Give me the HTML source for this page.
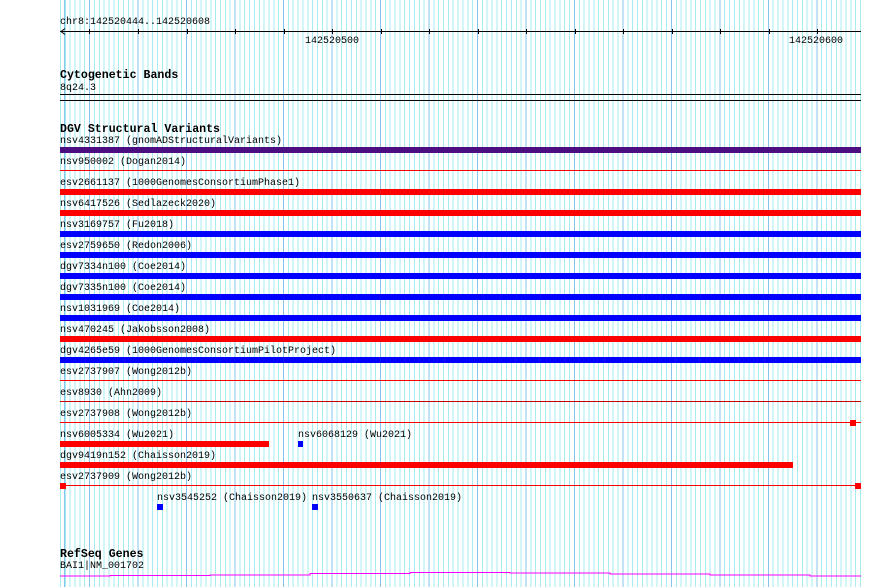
<!DOCTYPE html>
<html><head><meta charset="utf-8"><style>
body{margin:0;width:890px;height:587px;background:#fff;position:relative;overflow:hidden;font-family:"Liberation Mono",monospace;}
.grid{position:absolute;left:60px;top:0;width:801px;height:587px;
background-image:repeating-linear-gradient(90deg,#86c6ee 0 1px,transparent 1px 48.485px),repeating-linear-gradient(90deg,#a6ecf0 0 1px,transparent 1px 4.8485px);
background-position:29px 0,0 0;}
.t{position:absolute;font-size:10px;line-height:10px;color:#000;white-space:pre;margin-top:2px;}
.h{position:absolute;font-size:11.6px;line-height:12px;font-weight:bold;color:#000;white-space:pre;margin-top:2px;}
.l{position:absolute;left:60px;width:801px;height:1px;}
.b{position:absolute;height:6px;}
.r{background:#f00}.bl{background:#00f}
.k{position:absolute;top:29px;width:1px;height:5px;background:#000}
</style></head><body>
<div class="grid"></div>
<div class="t" style="left:60px;top:16px">chr8:142520444..142520608</div>
<div class="l" style="top:31px;background:#000"></div>
<svg style="position:absolute;left:60px;top:28px" width="6" height="8"><path d="M5 0.5L1 3.5L5 6.5" stroke="#000" fill="none"/></svg>
<div class="k" style="left:89px"></div><div class="k" style="left:138px"></div><div class="k" style="left:187px"></div><div class="k" style="left:235px"></div><div class="k" style="left:284px"></div><div class="k" style="left:332px"></div><div class="k" style="left:381px"></div><div class="k" style="left:429px"></div><div class="k" style="left:478px"></div><div class="k" style="left:526px"></div><div class="k" style="left:575px"></div><div class="k" style="left:623px"></div><div class="k" style="left:672px"></div><div class="k" style="left:720px"></div><div class="k" style="left:769px"></div><div class="k" style="left:817px"></div>
<div class="t" style="left:305px;top:35px">142520500</div>
<div class="t" style="left:789px;top:35px">142520600</div>

<div class="h" style="left:60px;top:68px">Cytogenetic Bands</div>
<div class="t" style="left:60px;top:82px">8q24.3</div>
<div class="l" style="top:94px;background:#000"></div>
<div class="l" style="top:100px;background:#000"></div>

<div class="h" style="left:60px;top:122px">DGV Structural Variants</div>
<div class="t" style="left:60px;top:135px">nsv4331387 (gnomADStructuralVariants)</div>
<div class="b" style="left:60px;width:801px;top:147px;background:#4b0f82"></div>
<div class="t" style="left:60px;top:156px">nsv950002 (Dogan2014)</div>
<div class="l r" style="top:170px"></div>
<div class="t" style="left:60px;top:177px">esv2661137 (1000GenomesConsortiumPhase1)</div>
<div class="b r" style="left:60px;width:801px;top:189px"></div>
<div class="t" style="left:60px;top:198px">nsv6417526 (Sedlazeck2020)</div>
<div class="b r" style="left:60px;width:801px;top:210px"></div>
<div class="t" style="left:60px;top:219px">nsv3169757 (Fu2018)</div>
<div class="b bl" style="left:60px;width:801px;top:231px"></div>
<div class="t" style="left:60px;top:240px">esv2759650 (Redon2006)</div>
<div class="b bl" style="left:60px;width:801px;top:252px"></div>
<div class="t" style="left:60px;top:261px">dgv7334n100 (Coe2014)</div>
<div class="b bl" style="left:60px;width:801px;top:273px"></div>
<div class="t" style="left:60px;top:282px">dgv7335n100 (Coe2014)</div>
<div class="b bl" style="left:60px;width:801px;top:294px"></div>
<div class="t" style="left:60px;top:303px">nsv1031969 (Coe2014)</div>
<div class="b bl" style="left:60px;width:801px;top:315px"></div>
<div class="t" style="left:60px;top:324px">nsv470245 (Jakobsson2008)</div>
<div class="b r" style="left:60px;width:801px;top:336px"></div>
<div class="t" style="left:60px;top:345px">dgv4265e59 (1000GenomesConsortiumPilotProject)</div>
<div class="b bl" style="left:60px;width:801px;top:357px"></div>
<div class="t" style="left:60px;top:366px">esv2737907 (Wong2012b)</div>
<div class="l r" style="top:380px"></div>
<div class="t" style="left:60px;top:387px">esv8930 (Ahn2009)</div>
<div class="l" style="top:401px;background:#c00"></div>
<div class="t" style="left:60px;top:408px">esv2737908 (Wong2012b)</div>
<div class="l r" style="top:422px"></div>
<div class="b r" style="left:850px;width:6px;top:420px"></div>
<div class="t" style="left:60px;top:429px">nsv6005334 (Wu2021)</div>
<div class="b r" style="left:60px;width:209px;top:441px"></div>
<div class="t" style="left:298px;top:429px">nsv6068129 (Wu2021)</div>
<div class="b bl" style="left:298px;width:5px;top:441px"></div>
<div class="t" style="left:60px;top:450px">dgv9419n152 (Chaisson2019)</div>
<div class="b r" style="left:60px;width:733px;top:462px"></div>
<div class="t" style="left:60px;top:471px">esv2737909 (Wong2012b)</div>
<div class="l r" style="top:485px"></div>
<div class="b r" style="left:60px;width:6px;top:483px"></div>
<div class="b r" style="left:855px;width:6px;top:483px"></div>
<div class="t" style="left:157px;top:492px">nsv3545252 (Chaisson2019)</div>
<div class="b bl" style="left:157px;width:6px;top:504px"></div>
<div class="t" style="left:312px;top:492px">nsv3550637 (Chaisson2019)</div>
<div class="b bl" style="left:312px;width:6px;top:504px"></div>

<div class="h" style="left:60px;top:547px">RefSeq Genes</div>
<div class="t" style="left:60px;top:560px">BAI1|NM_001702</div>
<svg style="position:absolute;left:0;top:0" width="890" height="587">
<path d="M60 576H110V575.5H210V575H310V573.5H410V572.5H510V573H610V574H710V575H810V576H861" stroke="#f0f" stroke-width="1" fill="none"/>
</svg>
</body></html>
